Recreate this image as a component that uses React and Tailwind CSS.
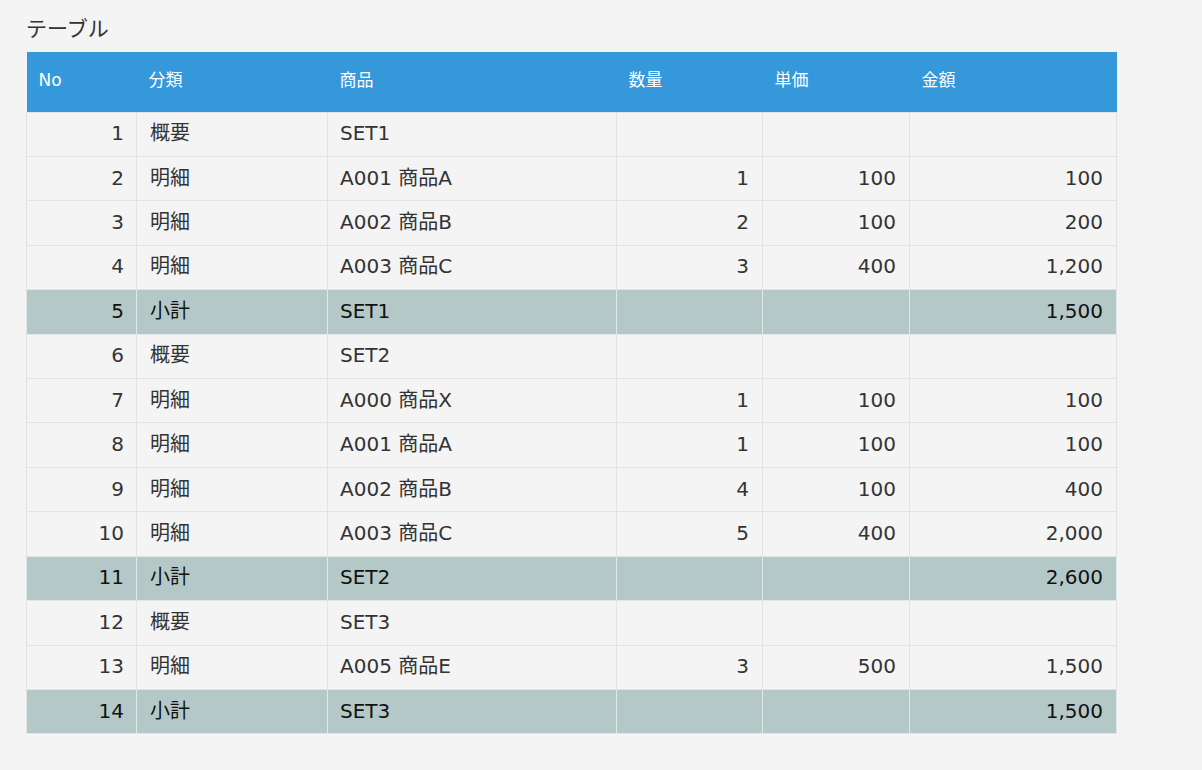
import React from "react";

const rows = [
  { no: 1, kind: "概要", item: "SET1" },
  { no: 2, kind: "明細", item: "A001 商品A", qty: "1", price: "100", amount: "100" },
  { no: 3, kind: "明細", item: "A002 商品B", qty: "2", price: "100", amount: "200" },
  { no: 4, kind: "明細", item: "A003 商品C", qty: "3", price: "400", amount: "1,200" },
  { no: 5, kind: "小計", item: "SET1", amount: "1,500", sub: true },
  { no: 6, kind: "概要", item: "SET2" },
  { no: 7, kind: "明細", item: "A000 商品X", qty: "1", price: "100", amount: "100" },
  { no: 8, kind: "明細", item: "A001 商品A", qty: "1", price: "100", amount: "100" },
  { no: 9, kind: "明細", item: "A002 商品B", qty: "4", price: "100", amount: "400" },
  { no: 10, kind: "明細", item: "A003 商品C", qty: "5", price: "400", amount: "2,000" },
  { no: 11, kind: "小計", item: "SET2", amount: "2,600", sub: true },
  { no: 12, kind: "概要", item: "SET3" },
  { no: 13, kind: "明細", item: "A005 商品E", qty: "3", price: "500", amount: "1,500" },
  { no: 14, kind: "小計", item: "SET3", amount: "1,500", sub: true },
];

const headers = ["No", "分類", "商品", "数量", "単価", "金額"];
const widths = ["w-[110px]", "w-[191px]", "w-[289px]", "w-[146px]", "w-[147px]", "w-[207px]"];

export default function App() {
  return (
    <div className="min-h-[770px] bg-[#f4f4f4] pl-[26px] pt-[13px] font-['DejaVu_Sans','Noto_Sans_CJK_JP',sans-serif] text-[#333]">
      <h1 className="text-[21px] leading-[29px] text-[#333] font-normal mb-[10px] font-['Noto_Sans_CJK_JP',sans-serif]">テーブル</h1>
      <table className="border-collapse table-fixed w-[1091px]">
        <thead>
          <tr className="bg-[#3598db] h-[60px]">
            {headers.map((h, i) => (
              <th key={h} className={`${widths[i]} text-left font-normal text-white text-[17px] px-[12px] pb-[2px]`}>
                {h}
              </th>
            ))}
          </tr>
        </thead>
        <tbody>
          {rows.map((r) => {
            const b = r.sub ? "border-[#e2e8e7]" : "border-[#e3e3e3]";
            return (
              <tr key={r.no} className={`${r.sub ? "bg-[#b4c8c7] text-[#111]" : "bg-[#f4f4f4] text-[#333]"} h-[44.43px] text-[20px]`}>
                <td className={`border ${b} text-right px-[12px] pb-[2px]`}>{r.no}</td>
                <td className={`border ${b} px-[13px] pb-[2px]`}>{r.kind}</td>
                <td className={`border ${b} px-[12px] pb-[2px]`}>{r.item}</td>
                <td className={`border ${b} text-right px-[13px] pb-[2px]`}>{r.qty}</td>
                <td className={`border ${b} text-right px-[13px] pb-[2px]`}>{r.price}</td>
                <td className={`border ${b} text-right px-[13px] pb-[2px]`}>{r.amount}</td>
              </tr>
            );
          })}
        </tbody>
      </table>
    </div>
  );
}
